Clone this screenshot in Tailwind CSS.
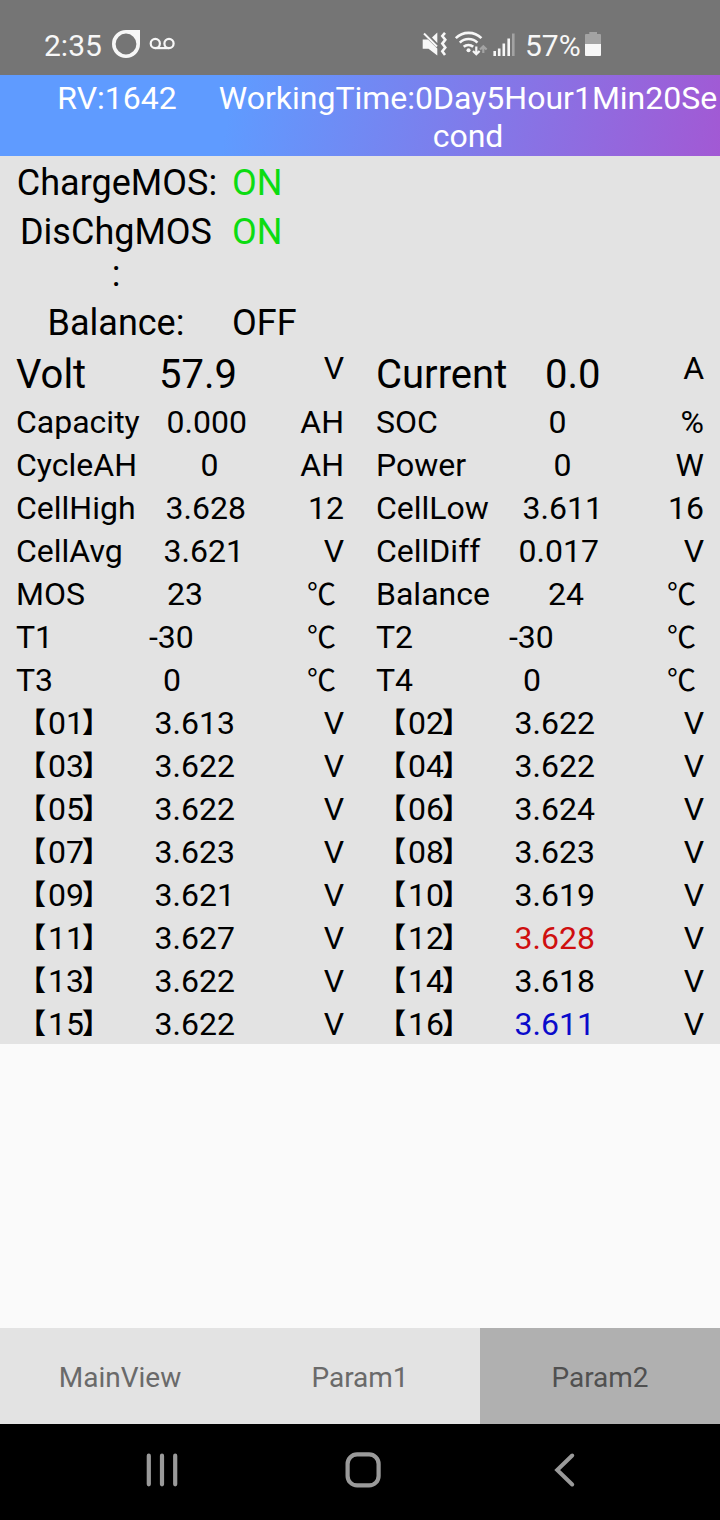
<!DOCTYPE html>
<html lang="en">
   <head>
      <meta charset="UTF-8" />
      <meta name="viewport" content="width=device-width, initial-scale=1.0" />
      <script src="https://cdn.jsdelivr.net/npm/@tailwindcss/browser@4"></script>
      <title>BMS Monitor</title>
   </head>

   <body
      class="flex h-[1520px] w-[720px] flex-col overflow-hidden bg-[#fafafa] font-[Roboto,'Noto_Sans_CJK_SC',sans-serif] text-black"
   >
      <!-- Status bar -->
      <div class="flex h-[75px] shrink-0 items-start bg-[#757575] pt-5 text-[#f7f7f7]">
         <div class="w-[80px] shrink-0 pl-11 pt-[8px] text-[30px] leading-[36px] whitespace-nowrap">2:35</div>
         <svg class="ml-[30px] h-[50px] w-[80px] shrink-0" viewBox="110 20 80 50" fill="none" stroke="#f7f7f7">
            <path fill="#f7f7f7" fill-rule="evenodd" stroke="none" d="M126 30H140V44A14 14 0 1 1 126 30ZM126 33.6A10.4 10.4 0 1 0 126 54.4A10.4 10.4 0 1 0 126 33.6Z" />
            <circle cx="155.3" cy="43.5" r="4.6" stroke-width="2.2" />
            <circle cx="169" cy="43.5" r="4.6" stroke-width="2.2" />
            <path stroke-width="2.2" d="M155.3 48.1H169" />
         </svg>
         <svg class="ml-[220px] h-[50px] w-[110px] shrink-0" viewBox="410 20 110 50" fill="none" stroke="#f7f7f7">
            <!-- muted speaker -->
            <path fill="#f7f7f7" stroke="none" d="M437.3 32.5V43L432 37.5Z" />
            <path fill="#f7f7f7" stroke="none" d="M422.7 39.5H428L437.3 48.5V55.5L428.5 48.8H422.7Z" />
            <path stroke-width="2" d="M424 33.5L437 46.5" />
            <path stroke-width="2.6" d="M445 32.8L442.3 36L445.3 39.7L442.3 43.6L445.3 47.5L442.3 51.3L445 55" />
            <!-- wifi -->
            <g stroke-width="2.6">
               <path d="M455.8 38.2A18 18 0 0 1 481.4 38.2" />
               <path d="M459.8 42.6A12.4 12.4 0 0 1 477.4 42.6" />
               <path d="M463.7 46.8A7 7 0 0 1 473.2 46.8" />
            </g>
            <circle cx="468.5" cy="50.3" r="2" fill="#f7f7f7" stroke="none" />
            <path stroke-width="2.2" d="M476.3 46.5V54M473 51L476.3 54.3L479.6 51" />
            <path stroke="#a3a3a3" stroke-width="2.2" d="M483.3 53V46.5M480 49.5L483.3 46.2L486.6 49.5" />
            <!-- signal -->
            <path stroke-width="2.6" d="M494.7 51V56M499.2 48.5V56M503.8 43.5V56M508.7 38.5V56" />
            <path stroke="#a3a3a3" stroke-width="2.6" d="M513.3 33.5V56" />
         </svg>
         <div class="ml-[5px] w-[56px] pt-[8px] text-[30px] leading-[36px] whitespace-nowrap">57%</div>
         <svg class="ml-[4px] h-[50px] w-[16px] shrink-0" viewBox="585 20 16 50">
            <path fill="#a3a3a3" d="M589.3 32H597V34H600Q601 34 601 35V45H585V35Q585 34 586 34H589.3Z" />
            <path fill="#f7f7f7" d="M585 44H601V55Q601 56 600 56H586Q585 56 585 55Z" />
         </svg>
      </div>

      <!-- Header -->
      <header
         class="flex h-[81px] shrink-0 bg-[linear-gradient(100deg,#5f9bff_0%,#5f9bff_32%,#a259d4_100%)] pt-[4px] text-center text-[32px] leading-[38px] text-white"
      >
         <div class="w-[216px] shrink-0 pl-[18px]">RV:1642</div>
         <div class="w-[504px] shrink-0">WorkingTime:0Day5Hour1Min20Se<br />cond</div>
      </header>

      <!-- Main Content -->
      <main class="h-[888px] shrink-0 bg-[#e3e3e3]">
         <!-- Switches -->
         <div class="flex h-[189px] flex-col gap-[7px] pt-[6px] text-[36px] leading-[42px]">
            <div class="flex">
               <div class="w-[232px] pl-[2px] text-center">ChargeMOS:</div>
               <div class="text-[#0cdc12]">ON</div>
            </div>
            <div class="flex">
               <div class="w-[232px] text-center">DisChgMOS<br />:</div>
               <div class="text-[#0cdc12]">ON</div>
            </div>
            <div class="flex">
               <div class="w-[232px] text-center">Balance:</div>
               <div>OFF</div>
            </div>
         </div>

         <!-- Readings -->
         <div id="readings" class="grid grid-cols-2 text-[32px]"></div>
      </main>

      <!-- Tabs -->
      <nav class="mt-auto flex h-[96px] shrink-0 bg-[#e3e3e3] text-[28px] text-[#6a6a6a]">
         <button class="flex-1 pt-[4px]">MainView</button>
         <button class="flex-1 pt-[4px]">Param1</button>
         <button class="flex-1 bg-[#b0b0b0] pt-[4px] text-[#505050]">Param2</button>
      </nav>

      <!-- Android navigation -->
      <div class="h-[96px] shrink-0 bg-black">
         <svg class="block h-[96px] w-[720px]" viewBox="0 1424 720 96" fill="none" stroke="#9a9a9a" stroke-width="4.2" stroke-linecap="round">
            <path d="M148.8 1455.7V1484.3M162 1455.7V1484.3M175.2 1455.7V1484.3" />
            <rect x="347.6" y="1454.4" width="31" height="31" rx="9.5" />
            <path stroke-width="4" d="M572.2 1455.5L557.2 1470L572.2 1484.5" />
         </svg>
      </div>

      <script>
         // label, label width, value, unit, value color
         const rows = [
            ["Volt", "w-[143px]", "57.9", "V"],
            ["Current", "w-[169px]", "0.0", "A"],
            ["Capacity", "w-[150.5px]", "0.000", "AH"],
            ["SOC", "w-[172.5px]", "0", "%"],
            ["CycleAH", "w-[184.5px]", "0", "AH"],
            ["Power", "w-[177.5px]", "0", "W"],
            ["CellHigh", "w-[149.5px]", "3.628", "12"],
            ["CellLow", "w-[146.5px]", "3.611", "16"],
            ["CellAvg", "w-[147.5px]", "3.621", "V"],
            ["CellDiff", "w-[142.5px]", "0.017", "V"],
            ["MOS", "w-[151px]", "23", "℃"],
            ["Balance", "w-[172px]", "24", "℃"],
            ["T1", "w-[133px]", "-30", "℃"],
            ["T2", "w-[133px]", "-30", "℃"],
            ["T3", "w-[147px]", "0", "℃"],
            ["T4", "w-[147px]", "0", "℃"],
         ];

         const cells = [
            "3.613", "3.622", "3.622", "3.622", "3.622", "3.624", "3.623", "3.623",
            "3.621", "3.619", "3.627", "3.628", "3.622", "3.618", "3.622", "3.611",
         ];
         cells.forEach((v, i) => {
            const no = String(i + 1).padStart(2, "0");
            const color = i === 11 ? "text-[#cf0f0f]" : i === 15 ? "text-[#0a0acb]" : "";
            const label = `<span class="flex"><span class="flex w-8 justify-end pr-[2px] text-[28px] font-bold">【</span>${no}<span class="-ml-[2px] text-[28px] font-bold">】</span></span>`;
            rows.push([label, "w-[138.5px]", v, "V", color]);
         });

         document.getElementById("readings").innerHTML = rows
            .map(([label, width, value, unit, color = ""], i) => {
               const big = i < 2;
               const rowClass = big ? "h-[54px] pt-[6px]" : "h-[43px] pt-[5px]";
               const textClass = big ? "text-[40px] leading-[48px]" : "leading-[37px]";
               let unitClass = big ? "-mt-[1px]" : "";
               if (unit === "℃") unitClass = "mr-[8px] pt-[1px] text-[29px]";
               return `<div class="flex px-4 ${rowClass}">
                  <span class="${width} ${textClass} shrink-0 whitespace-nowrap">${label}</span>
                  <span class="${textClass} ${color}">${value}</span>
                  <span class="${unitClass} ml-auto leading-[37px]">${unit}</span>
               </div>`;
            })
            .join("");
      </script>
   </body>
</html>
